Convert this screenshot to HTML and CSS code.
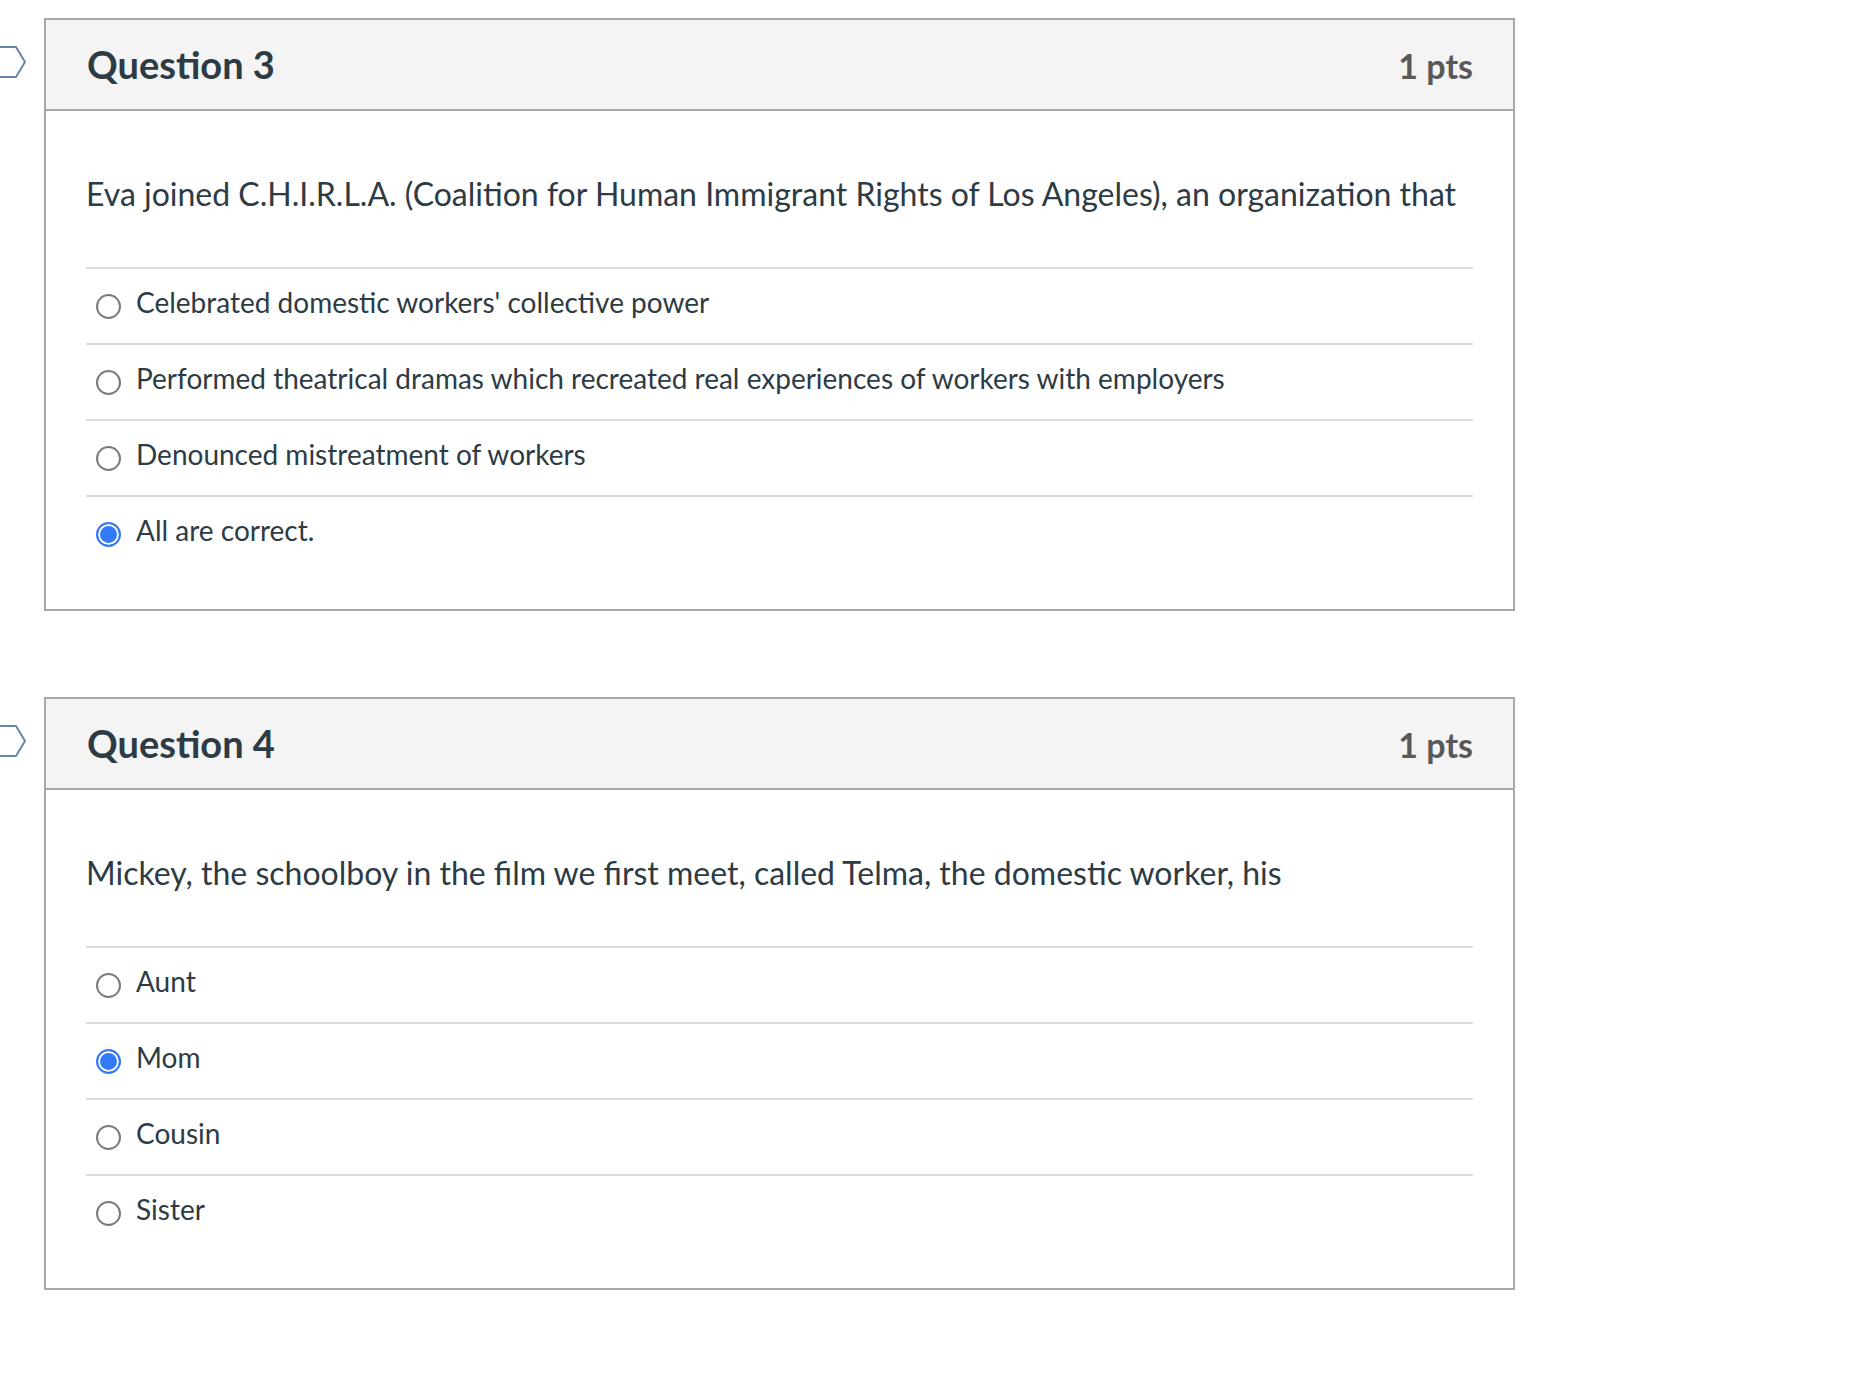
FILE: index.html
```html
<!DOCTYPE html>
<html lang="en">
<head>
<meta charset="utf-8">
<title>Quiz</title>
<link rel="stylesheet" href="styles.css">
</head>
<body>
<div class="quiz">
  <div class="question-row">
    <svg class="flag" width="26" height="32" viewBox="0 0 26 32" aria-hidden="true"><path d="M-3 1 H16 L25 16 L16 31 H-3" fill="none" stroke="#6786a5" stroke-width="2" stroke-linejoin="round"/></svg>
    <div class="question">
      <div class="qheader">
        <span class="qname">Question 3</span>
        <span class="qpts">1 pts</span>
      </div>
      <div class="qbody">
        <div class="qtext">Eva joined C.H.I.R.L.A. (Coalition for Human Immigrant Rights of Los Angeles), an organization that</div>
        <div class="answers">
          <label class="answer"><input type="radio" name="q3" class="radio"><span class="answer-text">Celebrated domestic workers' collective power</span></label>
          <label class="answer"><input type="radio" name="q3" class="radio"><span class="answer-text">Performed theatrical dramas which recreated real experiences of workers with employers</span></label>
          <label class="answer"><input type="radio" name="q3" class="radio"><span class="answer-text">Denounced mistreatment of workers</span></label>
          <label class="answer"><input type="radio" name="q3" class="radio" checked><span class="answer-text">All are correct.</span></label>
        </div>
      </div>
    </div>
  </div>

  <div class="question-row">
    <svg class="flag" width="26" height="32" viewBox="0 0 26 32" aria-hidden="true"><path d="M-3 1 H16 L25 16 L16 31 H-3" fill="none" stroke="#6786a5" stroke-width="2" stroke-linejoin="round"/></svg>
    <div class="question">
      <div class="qheader">
        <span class="qname">Question 4</span>
        <span class="qpts">1 pts</span>
      </div>
      <div class="qbody">
        <div class="qtext">Mickey, the schoolboy in the film we first meet, called Telma, the domestic worker, his</div>
        <div class="answers">
          <label class="answer"><input type="radio" name="q4" class="radio"><span class="answer-text">Aunt</span></label>
          <label class="answer"><input type="radio" name="q4" class="radio" checked><span class="answer-text">Mom</span></label>
          <label class="answer"><input type="radio" name="q4" class="radio"><span class="answer-text">Cousin</span></label>
          <label class="answer"><input type="radio" name="q4" class="radio"><span class="answer-text">Sister</span></label>
        </div>
      </div>
    </div>
  </div>
</div>
</body>
</html>
```

FILE: styles.css
```css
html, body {
  margin: 0;
  padding: 0;
  background: #ffffff;
}

body {
  font-family: Lato, "Noto Sans", "Liberation Sans", sans-serif;
  color: #2d3b45;
}

.quiz {
  padding-top: 18px;
}

.question-row {
  display: flex;
  align-items: flex-start;
  margin-bottom: 86px;
}

.flag {
  flex: none;
  margin-top: 28px;
  margin-right: 18px;
  overflow: visible;
}

.question {
  width: 1471px;
  box-sizing: border-box;
  border: 2px solid #a8a8a8;
  background: #ffffff;
}

.qheader {
  height: 91px;
  box-sizing: border-box;
  padding: 20px 40px 0 41px;
  display: flex;
  justify-content: space-between;
  align-items: baseline;
  background: #f4f4f4;
  border-bottom: 2px solid #a8a8a8;
}

.qname {
  font-size: 38px;
  line-height: 48px;
  font-weight: 700;
  color: #2d3b45;
}

.qpts {
  font-size: 34px;
  line-height: 48px;
  font-weight: 700;
  color: #595959;
}

.qbody {
  padding: 63px 40px 38px 40px;
}

.qtext {
  font-size: 32px;
  line-height: 40px;
  margin-bottom: 53px;
}

.answers {
  display: flex;
  flex-direction: column;
}

.answer {
  display: flex;
  align-items: flex-start;
  border-top: 2px solid #dddddd;
  padding: 13px 0 21px 10px;
  font-size: 28px;
  line-height: 40px;
}

.radio {
  appearance: none;
  -webkit-appearance: none;
  flex: none;
  width: 25px;
  height: 25px;
  box-sizing: border-box;
  margin: 12px 15px 0 0;
  border: 2px solid #7a7a7a;
  border-radius: 50%;
  background: #ffffff;
}

.radio:checked {
  border-color: #3479f6;
  background: #3479f6;
  box-shadow: inset 0 0 0 2px #ffffff;
}

.answer-text {
  color: #2d3b45;
}
```
